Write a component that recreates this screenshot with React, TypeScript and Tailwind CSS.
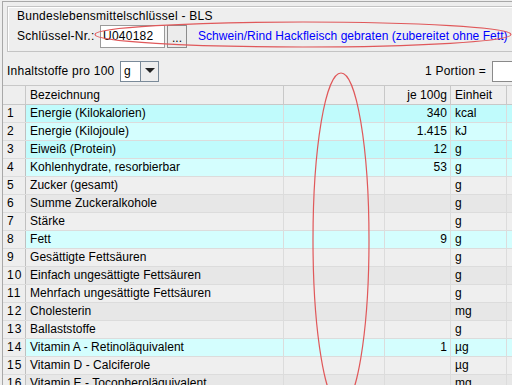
import React from "react"

type Row = { n: number; name: string; value: string; unit: string }

const ROWS: Row[] = [
  { n: 1, name: "Energie (Kilokalorien)", value: "340", unit: "kcal" },
  { n: 2, name: "Energie (Kilojoule)", value: "1.415", unit: "kJ" },
  { n: 3, name: "Eiweiß (Protein)", value: "12", unit: "g" },
  { n: 4, name: "Kohlenhydrate, resorbierbar", value: "53", unit: "g" },
  { n: 5, name: "Zucker (gesamt)", value: "", unit: "g" },
  { n: 6, name: "Summe Zuckeralkohole", value: "", unit: "g" },
  { n: 7, name: "Stärke", value: "", unit: "g" },
  { n: 8, name: "Fett", value: "9", unit: "g" },
  { n: 9, name: "Gesättigte Fettsäuren", value: "", unit: "g" },
  { n: 10, name: "Einfach ungesättigte Fettsäuren", value: "", unit: "g" },
  { n: 11, name: "Mehrfach ungesättigte Fettsäuren", value: "", unit: "g" },
  { n: 12, name: "Cholesterin", value: "", unit: "mg" },
  { n: 13, name: "Ballaststoffe", value: "", unit: "g" },
  { n: 14, name: "Vitamin A - Retinoläquivalent", value: "1", unit: "µg" },
  { n: 15, name: "Vitamin D - Calciferole", value: "", unit: "µg" },
  { n: 16, name: "Vitamin E - Tocopheroläquivalent", value: "", unit: "mg" },
]

function rowBg(r: Row) {
  if (r.value) return r.n % 2 === 1 ? "bg-[#c0fbfc]" : "bg-[#d4fefe]"
  return r.n % 2 === 1 ? "bg-[#efefef]" : "bg-[#e7e7e7]"
}

const COLS = "grid grid-cols-[23px_258px_101px_66px_56px_1fr]"

export default function App() {
  return (
    <div className="relative w-[512px] h-[385px] overflow-hidden bg-[#eeeeee] font-['Liberation_Sans',Arial,sans-serif] text-[12px] tracking-[0.25px] text-black">
      <div className="ml-[2px] mt-[1px] h-full border-l border-t border-[#a8a8a8]">
        {/* BLS group */}
        <div className="ml-[4px] mt-[4px] w-[540px] h-[46px] border border-[#c4c4c4] shadow-[inset_1px_1px_0_#ffffff] pl-[9px] pt-[2px]">
          <div className="leading-[14px] h-[14px]">Bundeslebensmittelschlüssel - BLS</div>
          <div className="flex items-center h-[24px] mt-[1px]">
            <span className="w-[83px] leading-[14px]">Schlüssel-Nr.:</span>
            <div className="w-[65px] h-[23px] bg-white border border-[#9a9a9a] flex items-center pl-[2px] leading-[14px]">
              U040182
            </div>
            <div className="ml-[2px] w-[20px] h-[23px] border border-[#8c8c8c] bg-[#ececec] flex items-end justify-center pb-[4px] leading-[10px] tracking-normal">
              ...
            </div>
            <span className="ml-[11px] text-[#0000ff] whitespace-nowrap leading-[14px] tracking-[0.05px]">
              Schwein/Rind Hackfleisch gebraten (zubereitet ohne Fett)
            </span>
          </div>
        </div>

        {/* Inhaltstoffe row */}
        <div className="flex items-center h-[22px] mt-[8px] pl-[4px]">
          <span className="w-[113px] leading-[14px]">Inhaltstoffe pro 100</span>
          <div className="flex w-[39px] h-[21px] border border-[#7a8a99]">
            <div className="w-[20px] bg-white pl-[3px] leading-[18px] border-r border-[#7a8a99]">g</div>
            <div className="flex-1 bg-[#eeeeee] flex items-center justify-center">
              <svg width="10" height="6" viewBox="0 0 10 6">
                <path d="M0 0 L10 0 L5 5 Z" fill="#222" />
              </svg>
            </div>
          </div>
          <div className="flex-1" />
          <span className="leading-[14px]">1 Portion =</span>
          <div className="ml-[6px] w-[20px] h-[21px] bg-white border border-r-0 border-[#8a8a8a]" />
        </div>

        {/* table */}
        <div className="mt-[3px] tracking-[0.05px]">
          <div className={`${COLS} h-[20px] border-t border-b border-[#c8c8c8] bg-[#eeeeee]`}>
            <div className="border-r border-[#c8c8c8]" />
            <div className="border-r border-[#c8c8c8] pl-[4px] leading-[18px]">Bezeichnung</div>
            <div className="border-r border-[#c8c8c8]" />
            <div className="border-r border-[#c8c8c8] pr-[3px] text-right leading-[18px]">je 100g</div>
            <div className="border-r border-[#c8c8c8] pl-[4px] leading-[18px]">Einheit</div>
            <div />
          </div>
          {ROWS.map((r) => (
            <div key={r.n} className={`${COLS} h-[18px] border-b border-[#dcdcdc]`}>
              <div className="bg-[#eeeeee] border-r border-[#c0c0c0] pl-[4px] leading-[17px] tracking-[1px]">
                {r.n}
              </div>
              <div className={`${rowBg(r)} border-r border-[#dcdcdc] pl-[4px] leading-[17px] whitespace-nowrap`}>
                {r.name}
              </div>
              <div className={`${rowBg(r)} border-r border-[#dcdcdc]`} />
              <div className={`${rowBg(r)} border-r border-[#dcdcdc] pr-[3px] text-right leading-[17px]`}>
                {r.value}
              </div>
              <div className={`${rowBg(r)} border-r border-[#dcdcdc] pl-[4px] leading-[17px]`}>{r.unit}</div>
              <div className={rowBg(r)} />
            </div>
          ))}
        </div>
      </div>

      {/* red annotation marks */}
      <svg className="absolute inset-0 pointer-events-none" width="512" height="385" viewBox="0 0 512 385">
        <ellipse cx="303" cy="34.5" rx="208" ry="12.5" fill="none" stroke="#e0585a" strokeWidth="1.2" />
        <ellipse cx="341" cy="240" rx="28" ry="167" fill="none" stroke="#e0585a" strokeWidth="1.2" />
      </svg>
    </div>
  )
}
